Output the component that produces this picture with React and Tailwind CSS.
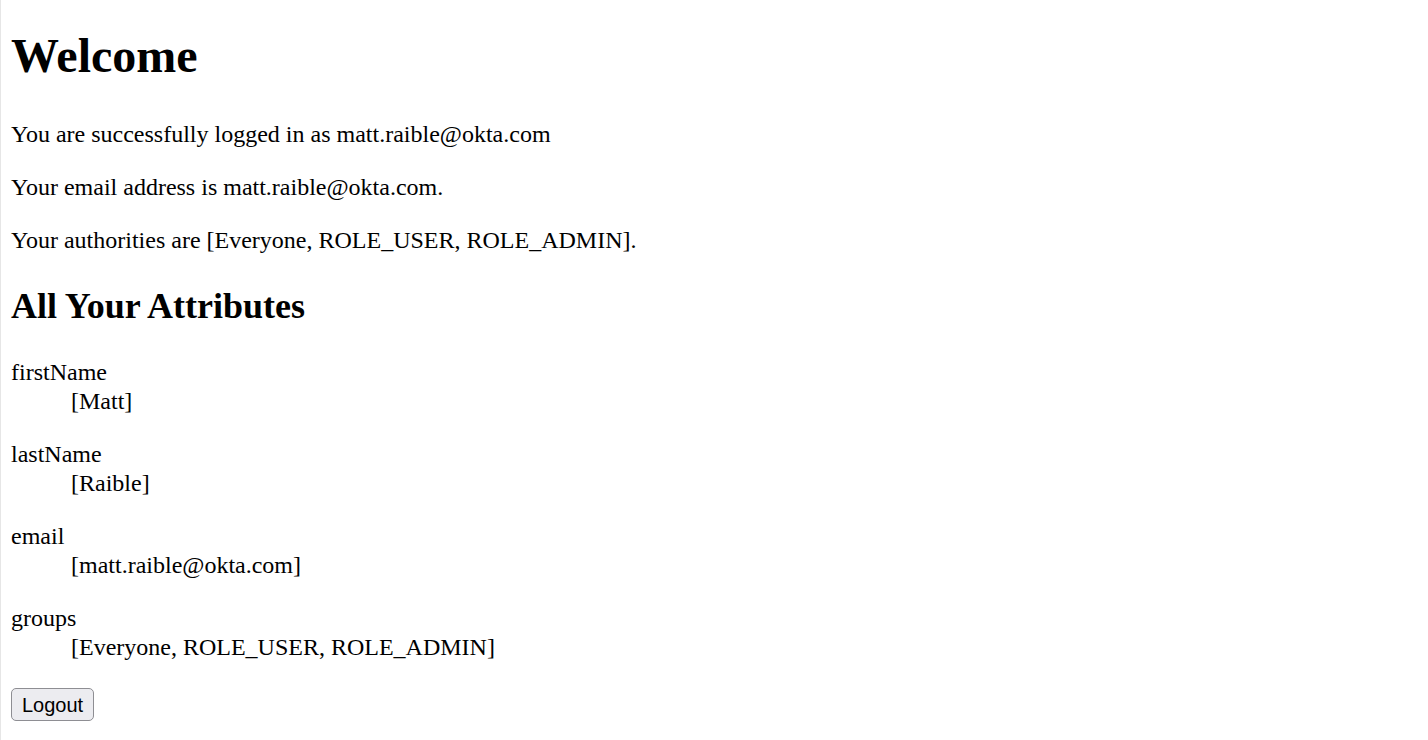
const attributes = [
  { name: "firstName", value: "[Matt]" },
  { name: "lastName", value: "[Raible]" },
  { name: "email", value: "[matt.raible@okta.com]" },
  { name: "groups", value: "[Everyone, ROLE_USER, ROLE_ADMIN]" },
];

export default function App() {
  return (
    <div className="min-h-[740px] bg-white border-l border-[#e6e6e6] px-[10px] pt-[28px] pb-4 text-black font-['Liberation_Serif','Times_New_Roman',serif] text-[24px] leading-[29px]">
      <h1 className="text-[48px] leading-[55px] font-bold mb-[37px]">Welcome</h1>
      <p className="mb-[24px]">You are successfully logged in as matt.raible@okta.com</p>
      <p className="mb-[24px]">Your email address is matt.raible@okta.com.</p>
      <p className="mb-[30px]">Your authorities are [Everyone, ROLE_USER, ROLE_ADMIN].</p>
      <h2 className="text-[36px] leading-[43px] font-bold mb-[30px]">All Your Attributes</h2>
      {attributes.map((a) => (
        <dl key={a.name} className="mb-[24px]">
          <dt>{a.name}</dt>
          <dd className="ml-[60px]">{a.value}</dd>
        </dl>
      ))}
      <div className="pt-[2px]">
        <button className="h-[33px] px-[10px] rounded-[5px] border border-[#8e8e93] bg-[#ececf0] font-['Liberation_Sans',Arial,sans-serif] text-[20px] leading-[24px] text-black">
          Logout
        </button>
      </div>
    </div>
  );
}
